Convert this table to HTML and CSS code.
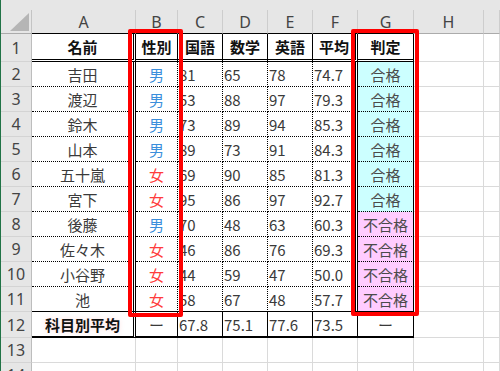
FILE: index.html
```html
<!DOCTYPE html>
<html lang="ja">
<head>
<meta charset="utf-8">
<title>成績表</title>
<link rel="stylesheet" href="styles.css">
</head>
<body>
<div class="sheet">
  <div class="topbar"></div>
  <div class="grid">
    <!-- column headers -->
    <div class="corner"><svg width="30" height="23" viewBox="0 0 30 23"><polygon points="28,3 28,21 9,21" fill="#b5b5b5"/></svg></div>
    <div class="ch tb">A</div>
    <div class="ch tb">B</div>
    <div class="ch tb">C</div>
    <div class="ch tb">D</div>
    <div class="ch tb">E</div>
    <div class="ch tb">F</div>
    <div class="ch tb">G</div>
    <div class="ch">H</div>
    <div class="ch"></div>

    <!-- row 1 -->
    <div class="rh">1</div>
    <div class="c bold r-dbl b-dbl">名前</div>
    <div class="c bold r-sol b-dbl">性別</div>
    <div class="c bold r-sol b-dbl">国語</div>
    <div class="c bold r-sol b-dbl">数学</div>
    <div class="c bold r-sol b-dbl">英語</div>
    <div class="c bold r-dbl b-dbl">平均</div>
    <div class="c bold r-sol b-dbl">判定</div>
    <div class="c"></div>
    <div class="c"></div>

    <!-- row 2 -->
    <div class="rh">2</div>
    <div class="c r-dbl b-dot">吉田</div>
    <div class="c male r-dot b-dot">男</div>
    <div class="c num r-dot b-dot">81</div>
    <div class="c num r-dot b-dot">65</div>
    <div class="c num r-dot b-dot">78</div>
    <div class="c num r-dbl b-dot">74.7</div>
    <div class="c pass r-sol b-dot">合格</div>
    <div class="c"></div>
    <div class="c"></div>

    <!-- row 3 -->
    <div class="rh">3</div>
    <div class="c r-dbl b-dot">渡辺</div>
    <div class="c male r-dot b-dot">男</div>
    <div class="c num r-dot b-dot">53</div>
    <div class="c num r-dot b-dot">88</div>
    <div class="c num r-dot b-dot">97</div>
    <div class="c num r-dbl b-dot">79.3</div>
    <div class="c pass r-sol b-dot">合格</div>
    <div class="c"></div>
    <div class="c"></div>

    <!-- row 4 -->
    <div class="rh">4</div>
    <div class="c r-dbl b-dot">鈴木</div>
    <div class="c male r-dot b-dot">男</div>
    <div class="c num r-dot b-dot">73</div>
    <div class="c num r-dot b-dot">89</div>
    <div class="c num r-dot b-dot">94</div>
    <div class="c num r-dbl b-dot">85.3</div>
    <div class="c pass r-sol b-dot">合格</div>
    <div class="c"></div>
    <div class="c"></div>

    <!-- row 5 -->
    <div class="rh">5</div>
    <div class="c r-dbl b-dot">山本</div>
    <div class="c male r-dot b-dot">男</div>
    <div class="c num r-dot b-dot">89</div>
    <div class="c num r-dot b-dot">73</div>
    <div class="c num r-dot b-dot">91</div>
    <div class="c num r-dbl b-dot">84.3</div>
    <div class="c pass r-sol b-dot">合格</div>
    <div class="c"></div>
    <div class="c"></div>

    <!-- row 6 -->
    <div class="rh">6</div>
    <div class="c r-dbl b-dot">五十嵐</div>
    <div class="c female r-dot b-dot">女</div>
    <div class="c num r-dot b-dot">69</div>
    <div class="c num r-dot b-dot">90</div>
    <div class="c num r-dot b-dot">85</div>
    <div class="c num r-dbl b-dot">81.3</div>
    <div class="c pass r-sol b-dot">合格</div>
    <div class="c"></div>
    <div class="c"></div>

    <!-- row 7 -->
    <div class="rh">7</div>
    <div class="c r-dbl b-dot">宮下</div>
    <div class="c female r-dot b-dot">女</div>
    <div class="c num r-dot b-dot">95</div>
    <div class="c num r-dot b-dot">86</div>
    <div class="c num r-dot b-dot">97</div>
    <div class="c num r-dbl b-dot">92.7</div>
    <div class="c pass r-sol b-dot">合格</div>
    <div class="c"></div>
    <div class="c"></div>

    <!-- row 8 -->
    <div class="rh">8</div>
    <div class="c r-dbl b-dot">後藤</div>
    <div class="c male r-dot b-dot">男</div>
    <div class="c num r-dot b-dot">70</div>
    <div class="c num r-dot b-dot">48</div>
    <div class="c num r-dot b-dot">63</div>
    <div class="c num r-dbl b-dot">60.3</div>
    <div class="c fail r-sol b-dot">不合格</div>
    <div class="c"></div>
    <div class="c"></div>

    <!-- row 9 -->
    <div class="rh">9</div>
    <div class="c r-dbl b-dot">佐々木</div>
    <div class="c female r-dot b-dot">女</div>
    <div class="c num r-dot b-dot">46</div>
    <div class="c num r-dot b-dot">86</div>
    <div class="c num r-dot b-dot">76</div>
    <div class="c num r-dbl b-dot">69.3</div>
    <div class="c fail r-sol b-dot">不合格</div>
    <div class="c"></div>
    <div class="c"></div>

    <!-- row 10 -->
    <div class="rh">10</div>
    <div class="c r-dbl b-dot">小谷野</div>
    <div class="c female r-dot b-dot">女</div>
    <div class="c num r-dot b-dot">44</div>
    <div class="c num r-dot b-dot">59</div>
    <div class="c num r-dot b-dot">47</div>
    <div class="c num r-dbl b-dot">50.0</div>
    <div class="c fail r-sol b-dot">不合格</div>
    <div class="c"></div>
    <div class="c"></div>

    <!-- row 11 -->
    <div class="rh">11</div>
    <div class="c r-dbl b-sol">池</div>
    <div class="c female r-dot b-sol">女</div>
    <div class="c num r-dot b-sol">58</div>
    <div class="c num r-dot b-sol">67</div>
    <div class="c num r-dot b-sol">48</div>
    <div class="c num r-dbl b-sol">57.7</div>
    <div class="c fail r-sol b-sol">不合格</div>
    <div class="c"></div>
    <div class="c"></div>

    <!-- row 12 -->
    <div class="rh">12</div>
    <div class="c bold halo r-dbl b-thk">科目別平均</div>
    <div class="c r-sol b-thk">ー</div>
    <div class="c num r-sol b-thk">67.8</div>
    <div class="c num r-sol b-thk">75.1</div>
    <div class="c num r-sol b-thk">77.6</div>
    <div class="c num r-sol b-thk">73.5</div>
    <div class="c r-sol b-thk">ー</div>
    <div class="c"></div>
    <div class="c"></div>

    <!-- row 13 -->
    <div class="rh">13</div>
    <div class="c"></div><div class="c"></div><div class="c"></div><div class="c"></div>
    <div class="c"></div><div class="c"></div><div class="c"></div><div class="c"></div><div class="c"></div>

    <!-- row 14 -->
    <div class="rh">14</div>
    <div class="c"></div><div class="c"></div><div class="c"></div><div class="c"></div>
    <div class="c"></div><div class="c"></div><div class="c"></div><div class="c"></div><div class="c"></div>
  </div>

  <div class="hl hl-b"></div>
  <div class="hl hl-g"></div>
</div>
</body>
</html>
```
FILE: styles.css
```css
html, body {
  margin: 0;
  padding: 0;
  background: #ffffff;
}

.sheet {
  position: relative;
  width: 500px;
  height: 371px;
  overflow: hidden;
  box-sizing: border-box;
  border-left: 1px solid #217346;
  font-family: "Noto Sans CJK JP", "Noto Sans", sans-serif;
}

.topbar {
  height: 10px;
  background: #e6e6e6;
}

.grid {
  display: grid;
  grid-template-columns: 31px 104px 42px 45px 45px 45px 45px 56px 70px 1fr;
  grid-template-rows: 24px 28px repeat(10, 25px) 26px 25px 25px;
}

.grid > div {
  box-sizing: border-box;
  display: flex;
  align-items: center;
  justify-content: center;
  white-space: nowrap;
  overflow: hidden;
}

.corner {
  background: #e6e6e6;
  border-right: 1px solid #c4c4c4;
  border-bottom: 1px solid #ababab;
  align-items: flex-start !important;
  justify-content: flex-start !important;
}

.corner svg {
  display: block;
}

.ch {
  background: #e6e6e6;
  border-right: 1px solid #cdcdcd;
  border-bottom: 1px solid #ababab;
  color: #444444;
  font-family: "Noto Sans", sans-serif;
  font-size: 16px;
  padding-top: 1px;
}

.ch.tb {
  border-bottom-color: #000000;
}

.rh {
  background: #e6e6e6;
  border-right: 1px solid #bdbdbd;
  border-bottom: 1px solid #d4d4d4;
  color: #444444;
  font-family: "Noto Sans", sans-serif;
  font-size: 16px;
}

.c {
  background: #ffffff;
  border-right: 1px solid #dadada;
  border-bottom: 1px solid #dadada;
  color: #3a3a3a;
  font-size: 15px;
}

.bold {
  font-weight: bold;
  color: #111111;
}

.halo {
  text-shadow: 0 0 5px rgba(255, 120, 120, 0.25);
}

.num {
  justify-content: flex-start !important;
  padding-left: 1px;
}

.male {
  color: #3b8fdc;
}

.female {
  color: #ff3c3c;
}

.pass {
  background: #ccffff;
  color: #4a4a4a;
}

.fail {
  background: #ffccff;
  color: #4a4a4a;
}

.r-dbl { border-right: 3px double #000000; }
.r-sol { border-right: 1px solid #000000; }
.r-dot { border-right: 1px dotted #000000; }

.b-dbl { border-bottom: 3px double #000000; }
.b-sol { border-bottom: 1px solid #000000; }
.b-dot { border-bottom: 1px dotted #000000; }
.b-thk { border-bottom: 2px solid #000000; }

.hl {
  position: absolute;
  box-sizing: border-box;
  border: 4px solid #ff0000;
  border-radius: 2px;
  pointer-events: none;
}

.hl-b {
  left: 127px;
  top: 29px;
  width: 55px;
  height: 288px;
}

.hl-g {
  left: 350px;
  top: 29px;
  width: 68px;
  height: 287px;
}
```
